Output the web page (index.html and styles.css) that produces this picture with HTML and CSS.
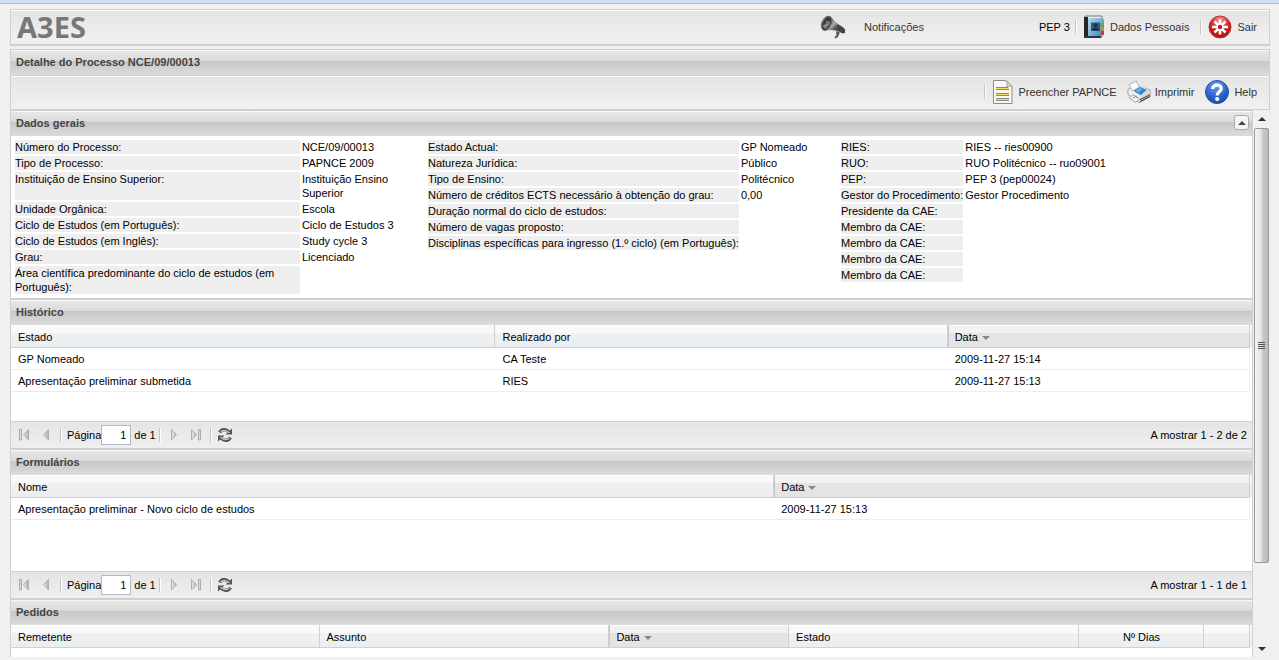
FILE: index.html
```html
<!DOCTYPE html>
<html lang="pt">
<head>
<meta charset="utf-8">
<title>A3ES - Detalhe do Processo</title>
<link rel="stylesheet" href="styles.css">
</head>
<body>
<svg class="defs" width="0" height="0" aria-hidden="true">
  <defs>
    <linearGradient id="gArrow" x1="0" x2="1"><stop offset="0" stop-color="#eee"/><stop offset="1" stop-color="#aaa"/></linearGradient>
    <linearGradient id="gHorn" x1="0" y1="0" x2="1" y2="1"><stop offset="0" stop-color="#333"/><stop offset=".45" stop-color="#aaa"/><stop offset=".6" stop-color="#555"/><stop offset="1" stop-color="#333"/></linearGradient>
    <linearGradient id="gBook" x1="0" y1="0" x2="1" y2="1"><stop offset="0" stop-color="#b4d8ec"/><stop offset=".5" stop-color="#7fb4d6"/><stop offset="1" stop-color="#4686b4"/></linearGradient>
    <radialGradient id="gRed" cx=".5" cy=".2" r=".8"><stop offset="0" stop-color="#f2a0a0"/><stop offset=".5" stop-color="#d8262b"/><stop offset="1" stop-color="#a80f14"/></radialGradient>
    <radialGradient id="gBlue" cx=".45" cy=".2" r=".85"><stop offset="0" stop-color="#6c9df0"/><stop offset=".6" stop-color="#2b62cf"/><stop offset="1" stop-color="#1c47a8"/></radialGradient>
    <symbol id="i-first" viewBox="0 0 16 16"><path d="M3.500 2.500h2v10.500h-2z" fill="#ddd" stroke="#aaa"/><path d="M12.500 2.500v10.500L7.500 7.700z" fill="url(#gArrow)" stroke="#b0b0b0"/></symbol>
    <symbol id="i-prev" viewBox="0 0 16 16"><path d="M10.500 2.500v10.500L5.500 7.700z" fill="url(#gArrow)" stroke="#b0b0b0"/></symbol>
    <symbol id="i-next" viewBox="0 0 16 16"><path d="M5.500 2.500v10.500l5-5.300z" fill="url(#gArrow)" stroke="#b0b0b0"/></symbol>
    <symbol id="i-last" viewBox="0 0 16 16"><path d="M3.500 2.500v10.500l5-5.300z" fill="url(#gArrow)" stroke="#b0b0b0"/><path d="M10.500 2.500h2v10.500h-2z" fill="#ddd" stroke="#aaa"/></symbol>
    <symbol id="i-refresh" viewBox="0 0 16 16"><g fill="none" stroke="#4c4c4c" stroke-width="3.200"><path d="M2.600 5.500C4.500 2 9 1.500 12 5"/><path d="M13.400 10.500C11.500 14 7 14.500 4 11"/></g><path d="M15 1.500v6H8.500zM1 14.500v-6h6.500z" fill="#555"/><g fill="none" stroke="#c4c4c4" stroke-width="1.300"><path d="M3.300 5.200C5.500 2.600 9 2.600 12.500 6"/><path d="M12.700 10.800c-2.200 2.600-5.700 2.600-9.200-.8"/></g></symbol>
  </defs>
</svg>
<div class="strip"></div>
<div class="page">
  <header class="topbar">
    <div class="logo">A3ES</div>
    <a class="tool notify" href="#">
      <svg width="26" height="26" viewBox="0 0 26 26" aria-hidden="true">
        <path d="M16 17l4 1.500-2.500 5-3 1 .5-2 1.500-1z" fill="#555"/>
        <path d="M10 2c4 4 6 7 12 10.500 3 2 4 4 2.500 6-1.500 1.500-3 .5-4-.3-5-2.700-10-2.700-15-1.700z" fill="url(#gHorn)"/>
        <path d="M17 11l7 4c1.500 2 1.300 3.500.3 4.500l-6.300-3z" fill="#444"/>
        <ellipse cx="6.500" cy="9.300" rx="5" ry="8" transform="rotate(24 6.500 9.300)" fill="#666"/>
        <ellipse cx="6.700" cy="9.500" rx="3.600" ry="6.600" transform="rotate(24 6.700 9.500)" fill="#333"/>
        <path d="M2.500 12l7-5 .5 3-4.500 5z" fill="#888"/><circle cx="7.500" cy="8.500" r="2" fill="#777"/>
      </svg>
      <span>Notificações</span></a>
    <span class="user">PEP 3</span>
    <span class="sep"></span>
    <a class="tool" href="#">
      <svg width="22" height="24" viewBox="0 0 22 24" aria-hidden="true">
        <path d="M2 1h17v21H2z" fill="#eee" stroke="#777"/>
        <path d="M18 4h3v4h-3z" fill="#55b5c5"/><path d="M18 8h3v4h-3z" fill="#66a84b"/><path d="M18 12h3v4h-3z" fill="#d9862b"/><path d="M18 16h3v4h-3z" fill="#c93a35"/>
        <path d="M1 2h4v20H1z" fill="#20262b"/><path d="M5 3h13v19H5z" fill="url(#gBook)"/>
        <path d="M8 7.500h9v8.500H8z" fill="#2e5c80"/><circle cx="12.500" cy="10.200" r="1.900" fill="#15304a"/><path d="M9 15.500c.3-2.300 2-3 3.500-3s3.200.7 3.500 3z" fill="#15304a"/><path d="M1 21h17v2H1z" fill="#25394a"/>
      </svg>
      <span>Dados Pessoais</span></a>
    <span class="sep"></span>
    <a class="tool" href="#">
      <svg width="24" height="24" viewBox="0 0 24 24" aria-hidden="true">
        <circle cx="12" cy="12" r="11" fill="url(#gRed)" stroke="#b33"/>
        <g fill="none" stroke="#fff" stroke-width="2.600"><path d="M12 4.500v5M12 14.500v5M4 12h5M15 12h5M6.500 6.500l3.700 3.700M13.800 13.800l3.700 3.700M6.500 17.500l3.700-3.700M13.800 10.200l3.700-3.700"/></g>
        <circle cx="12" cy="12" r="2.800" fill="none" stroke="#fff" stroke-width="1.200"/><circle cx="12" cy="12" r="2" fill="#c8161b"/>
      </svg>
      <span>Sair</span></a>
  </header>

  <main class="process">
    <h1 class="bar">Detalhe do Processo NCE/09/00013</h1>
    <nav class="actions">
      <span class="sep"></span>
      <a class="tool" href="#">
        <svg width="22" height="26" viewBox="0 0 22 26" aria-hidden="true">
          <path d="M1.500 1.500h12.500l6 6V24.500H1.500z" fill="#f7f7f7" stroke="#8c8c8c"/><path d="M14 1.500c1.500 2 1.500 4 .5 6.500 2-1 4-1 5.500-.5z" fill="#ddd" stroke="#aaa"/>
          <g fill="#f9df60"><path d="M4 8h13v3H4zM4 14h13v3H4zM4 19h13v3H4z"/></g><path d="M4 8.500h12M17 10.500H4M4 14.500h13M4 16.500h13M4 19.500h13M4 21.500h13" stroke="#8c8a7c"/>
        </svg>
        <span>Preencher PAPNCE</span></a>
      <a class="tool" href="#">
        <svg width="24" height="24" viewBox="0 0 26 26" aria-hidden="true">
          <path d="M1 10l8-4 16 4.500V18L13 24.500 1 15.500z" fill="#eef0f2" stroke="#999"/>
          <path d="M2.500 5L10 1l3.500 7-8 4z" fill="#fff" stroke="#aaa"/>
          <path d="M6 11.500l8-4.500 8 3.500-7 6.500z" fill="#2f84cc" stroke="#d4e6f5"/><path d="M9 11.500l5-3 3 1.300-4 3.700z" fill="#6cb0e4"/>
          <path d="M15 17l7-6.500 3 .5v7l-11 5.500z" fill="#d4d8dc"/><path d="M14 21.500l11-5.500M14 23.500l11-5.500" stroke="#4a4f55" stroke-width="1.200"/>
          <path d="M2 19l5-3 7 4.500-5 3.500z" fill="#f7f9fb" stroke="#999"/><path d="M6 19.500l3-1.500 2 1.200" fill="none" stroke="#3184bf"/>
        </svg>
        <span>Imprimir</span></a>
      <a class="tool" href="#">
        <svg width="26" height="26" viewBox="0 0 26 26" aria-hidden="true">
          <circle cx="13" cy="13" r="11.500" fill="url(#gBlue)" stroke="#234fa8"/>
          <path d="M8.600 10C8.800 4.700 17.700 5 17.200 9.800c-.3 3-4 3-4 6.700" fill="none" stroke="#fff" stroke-width="3.300"/><circle cx="13.200" cy="20" r="2.100" fill="#fff"/>
        </svg>
        <span>Help</span></a>
    </nav>
  </main>

  <div class="viewport">
    <div class="content">
      <section class="panel">
        <div class="bar"><h2>Dados gerais</h2><button class="collapse" type="button" aria-label="Recolher"><svg width="8" height="4" viewBox="0 0 8 4"><path d="M0 4l4-4 4 4z" fill="#444"/></svg></button></div>
        <div class="facts">
          <table class="f1">
            <tr><th>Número do Processo:</th><td>NCE/09/00013</td></tr>
            <tr><th>Tipo de Processo:</th><td>PAPNCE 2009</td></tr>
            <tr><th>Instituição de Ensino Superior:</th><td>Instituição Ensino<br>Superior</td></tr>
            <tr><th>Unidade Orgânica:</th><td>Escola</td></tr>
            <tr><th>Ciclo de Estudos (em Português):</th><td>Ciclo de Estudos 3</td></tr>
            <tr><th>Ciclo de Estudos (em Inglês):</th><td>Study cycle 3</td></tr>
            <tr><th>Grau:</th><td>Licenciado</td></tr>
            <tr><th>Área científica predominante do ciclo de estudos (em Português):</th><td></td></tr>
          </table>
          <table class="f2">
            <tr><th>Estado Actual:</th><td>GP Nomeado</td></tr>
            <tr><th>Natureza Jurídica:</th><td>Público</td></tr>
            <tr><th>Tipo de Ensino:</th><td>Politécnico</td></tr>
            <tr><th>Número de créditos ECTS necessário à obtenção do grau:</th><td>0,00</td></tr>
            <tr><th>Duração normal do ciclo de estudos:</th><td></td></tr>
            <tr><th>Número de vagas proposto:</th><td></td></tr>
            <tr><th>Disciplinas específicas para ingresso (1.º ciclo) (em Português):</th><td></td></tr>
          </table>
          <table class="f3">
            <tr><th>RIES:</th><td>RIES -- ries00900</td></tr>
            <tr><th>RUO:</th><td>RUO Politécnico -- ruo09001</td></tr>
            <tr><th>PEP:</th><td>PEP 3 (pep00024)</td></tr>
            <tr><th>Gestor do Procedimento:</th><td>Gestor Procedimento</td></tr>
            <tr><th>Presidente da CAE:</th><td></td></tr>
            <tr><th>Membro da CAE:</th><td></td></tr>
            <tr><th>Membro da CAE:</th><td></td></tr>
            <tr><th>Membro da CAE:</th><td></td></tr>
            <tr><th>Membro da CAE:</th><td></td></tr>
          </table>
        </div>
      </section>

      <section class="panel">
        <div class="bar"><h2>Histórico</h2></div>
        <div class="grid">
          <table>
            <colgroup><col class="h1"><col class="h2"><col></colgroup>
            <thead><tr><th>Estado</th><th>Realizado por</th><th class="sorted">Data</th></tr></thead>
            <tbody>
              <tr><td>GP Nomeado</td><td>CA Teste</td><td>2009-11-27 15:14</td></tr>
              <tr><td>Apresentação preliminar submetida</td><td>RIES</td><td>2009-11-27 15:13</td></tr>
            </tbody>
          </table>
        </div>
        <div class="pager">
          <button type="button" aria-label="Primeira"><svg width="16" height="16"><use href="#i-first"/></svg></button>
          <button type="button" aria-label="Anterior"><svg width="16" height="16"><use href="#i-prev"/></svg></button>
          <span class="sep"></span>
          <label for="p1">Página</label><input id="p1" type="text" value="1"><span>de 1</span>
          <span class="sep"></span>
          <button type="button" aria-label="Seguinte"><svg width="16" height="16"><use href="#i-next"/></svg></button>
          <button type="button" aria-label="Última"><svg width="16" height="16"><use href="#i-last"/></svg></button>
          <span class="sep"></span>
          <button type="button" aria-label="Actualizar"><svg width="16" height="16"><use href="#i-refresh"/></svg></button>
          <span class="count">A mostrar 1 - 2 de 2</span>
        </div>
      </section>

      <section class="panel">
        <div class="bar"><h2>Formulários</h2></div>
        <div class="grid">
          <table>
            <colgroup><col class="n1"><col></colgroup>
            <thead><tr><th>Nome</th><th class="sorted">Data</th></tr></thead>
            <tbody><tr><td>Apresentação preliminar - Novo ciclo de estudos</td><td>2009-11-27 15:13</td></tr></tbody>
          </table>
        </div>
        <div class="pager">
          <button type="button" aria-label="Primeira"><svg width="16" height="16"><use href="#i-first"/></svg></button>
          <button type="button" aria-label="Anterior"><svg width="16" height="16"><use href="#i-prev"/></svg></button>
          <span class="sep"></span>
          <label for="p2">Página</label><input id="p2" type="text" value="1"><span>de 1</span>
          <span class="sep"></span>
          <button type="button" aria-label="Seguinte"><svg width="16" height="16"><use href="#i-next"/></svg></button>
          <button type="button" aria-label="Última"><svg width="16" height="16"><use href="#i-last"/></svg></button>
          <span class="sep"></span>
          <button type="button" aria-label="Actualizar"><svg width="16" height="16"><use href="#i-refresh"/></svg></button>
          <span class="count">A mostrar 1 - 1 de 1</span>
        </div>
      </section>

      <section class="panel">
        <div class="bar"><h2>Pedidos</h2></div>
        <div class="grid">
          <table>
            <colgroup><col class="r1"><col class="r2"><col class="r3"><col class="r2"><col class="r5"><col></colgroup>
            <thead><tr><th>Remetente</th><th>Assunto</th><th class="sorted">Data</th><th>Estado</th><th class="center">Nº Dias</th><th></th></tr></thead>
          </table>
        </div>
      </section>
    </div>
    <div class="scrollbar" aria-hidden="true">
      <svg width="8" height="5" viewBox="0 0 8 5"><path d="M0 4l4-4 4 4z" fill="#333"/></svg>
      <div class="track"><div class="thumb"><i></i><i></i><i></i><i></i></div></div>
      <svg width="8" height="5" viewBox="0 0 8 5"><path d="M0 1l4 4 4-4z" fill="#333"/></svg>
    </div>
  </div>
</div>
</body>
</html>
```

FILE: styles.css
```css
* { box-sizing: border-box; }
body {
  margin: 0;
  height: 100vh;
  display: flex;
  flex-direction: column;
  background: #f0f0f0;
  color: #000;
  font: 11px/14px "Liberation Sans", Arial, sans-serif;
}
.defs { position: absolute; }
.strip { flex: none; height: 4px; background: #d0dff5; border-bottom: 1px solid #b0b8cc; }
.page {
  flex: 1;
  min-height: 0;
  display: flex;
  flex-direction: column;
  padding: 5px 9px 3px 10px;
}
h1, h2 { margin: 0; font: inherit; }
button { padding: 0; border: 0; background: none; display: flex; align-items: center; justify-content: center; }

.topbar, .actions {
  display: flex;
  align-items: center;
  justify-content: flex-end;
  background: linear-gradient(#e4e4e4, #f1f1f1);
  border: 1px solid #d0d0d0;
  box-shadow: inset 0 1px #fff;
  padding: 0 12px 0 6px;
}
.topbar { flex: none; height: 37px; border-bottom-width: 2px; margin-bottom: 3px; }
.logo { margin-right: auto; font: bold 29px/34px "Noto Sans", sans-serif; color: #777; }
.tool { display: flex; align-items: center; gap: 5px; color: #333; text-decoration: none; }
.tool.notify { gap: 18px; margin-right: 115px; }
.user { margin-right: 5px; }
.sep { width: 2px; height: 14px; border-left: 1px solid #c4c4c4; border-right: 1px solid #fff; }
.topbar .sep + .tool { margin-left: 6px; }
.topbar .tool + .sep { margin-left: 11px; }

.process { flex: none; }
.bar {
  display: flex;
  align-items: center;
  justify-content: space-between;
  height: 26px;
  padding: 0 3px 2px 5px;
  border: 1px solid #d0d0d0;
  border-bottom: 0;
  background: linear-gradient(#e9e9e9, #dadada 44%, #c6c6c6 44%, #dcdcdc);
  box-shadow: inset 0 1px #f8f8f8;
  color: #444;
  font-weight: bold;
}
.actions { height: 35px; gap: 10px; padding-bottom: 2px; border-bottom-width: 1px; }
.actions .tool { gap: 4px; }
.actions .sep { margin-right: -4px; }

.viewport { flex: 1; min-height: 0; display: flex; gap: 1px; padding-right: 1px; }
.content { flex: 1; min-width: 0; overflow: hidden; background: #fff; border: solid #d0d0d0; border-width: 0 1px; }
.panel { border-bottom: 1px solid #d0d0d0; }
.panel:last-child { border-bottom: 0; }
.panel .bar { border-width: 1px 0; }
.collapse { width: 15px; height: 15px; border: 1px solid #aaa; border-radius: 3px; background: #f5f5f5; }

.facts { display: grid; grid-template-columns: repeat(3, 1fr); align-items: start; justify-items: start; padding: 2px 0 2px 2px; }
.facts table { border-spacing: 2px; }
.facts th, .facts td { padding: 0; height: 14px; text-align: left; vertical-align: top; font-weight: normal; }
.facts th { background: #eee; }
.f1 { width: 100%; }
.f1 th { width: 70%; }
.f2 th, .f3 th { white-space: nowrap; }

.grid { height: 96px; }
.grid table { width: 100%; table-layout: fixed; border-collapse: separate; border-spacing: 0; padding: 0 2px 0 0; background: linear-gradient(#f9f9f9, #ebeef0) top / 100% 22px no-repeat; }
.grid th {
  height: 23px;
  padding: 2px 6px 0 7px;
  border-right: 1px solid #d0d0d0;
  border-bottom: 1px solid #d0d0d0;
  background: linear-gradient(#f9f9f9 36%, #eff1f3 36%, #ebeef0);
  box-shadow: inset 0 1px #fff;
  text-align: left;
  font-weight: normal;
}
.grid th.sorted { padding-left: 6px; background: linear-gradient(#f2f2f2 36%, #e4e4e4 36%); border-left: 1px solid #c8c8c8; }
.grid th.center { text-align: center; }
.sorted::after { content: ""; display: inline-block; margin-left: 4px; border: 4px solid transparent; border-top-color: #888; border-bottom: 0; vertical-align: 1px; }
.grid td { height: 22px; padding: 0 7px; border-bottom: 1px solid #ededed; }
.grid td:last-child { border-right: 1px solid #ededed; }
.h1 { width: 39.1%; }
.h2 { width: 36.5%; }
.n1 { width: 61.6%; }
.r1 { width: 24.9%; }
.r2 { width: 23.4%; }
.r3 { width: 14.5%; }
.r5 { width: 10.1%; }

.pager {
  display: flex;
  align-items: center;
  height: 27px;
  padding: 0 5px 0 2px;
  border-top: 1px solid #d0d0d0;
  background: linear-gradient(#e5e5e5, #efefef);
}
.pager button { width: 22px; height: 22px; }
.pager .sep { margin: 0 2px 0 3px; }
.pager label { margin: 0 0 0 3px; }
.pager input { width: 30px; height: 20px; margin-right: 3px; padding: 0 4px; border: 1px solid #b5b8c8; background: #fff; font: inherit; text-align: right; }
.count { margin-left: auto; }

.scrollbar { flex: none; width: 15px; display: flex; flex-direction: column; align-items: center; gap: 6px; padding: 7px 0 6px; background: #f1f1f1; }
.track { flex: 1; width: 100%; }
.thumb {
  height: 85%;
  display: flex;
  flex-direction: column;
  align-items: center;
  justify-content: center;
  gap: 1px;
  border: 1px solid #999;
  border-radius: 2px;
  background: linear-gradient(90deg, #f5f5f5, #e6e6e6 45%, #c8c8cc 60%, #bbb);
}
.thumb i { width: 7px; height: 1px; background: #555; }
```
